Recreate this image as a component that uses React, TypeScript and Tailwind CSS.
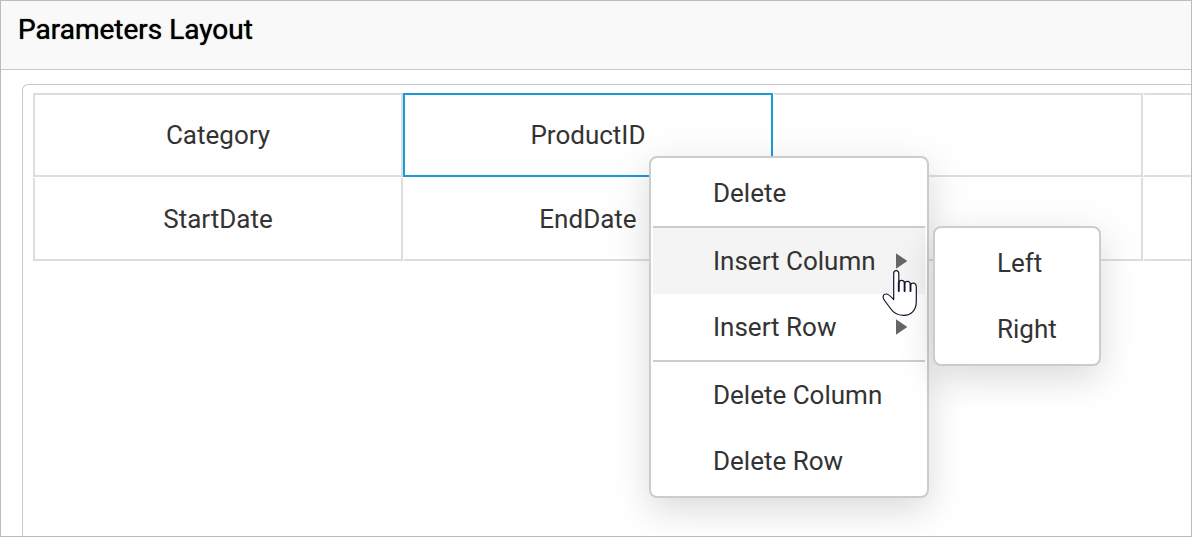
import { useState } from "react";
import type { ReactNode } from "react";

const columns = 4;
const parameters = ["Category", "ProductID", "", "", "StartDate", "EndDate", "", ""];

function Cell({
  label,
  index,
  selected,
  onSelect,
}: {
  label: string;
  index: number;
  selected: boolean;
  onSelect: () => void;
}) {
  const first = index % columns === 0;
  const top = index < columns;
  return (
    <button
      type="button"
      onClick={onSelect}
      aria-label={label || "Empty cell"}
      aria-pressed={selected}
      className={`flex h-[84px] items-center justify-center border-2 bg-[#fefefe] outline-none ${
        selected
          ? "border-[#1c9ad6]"
          : `border-r-[#dddddd] border-b-[#dddddd] ${first ? "border-l-[#dddddd]" : "border-l-[#fefefe]"} ${top ? "border-t-[#dddddd]" : "border-t-[#fefefe]"}`
      }`}
    >
      {label}
    </button>
  );
}

function MenuItem({
  children,
  active = false,
  submenu = false,
}: {
  children: ReactNode;
  active?: boolean;
  submenu?: boolean;
}) {
  return (
    <button
      type="button"
      role="menuitem"
      aria-haspopup={submenu ? "menu" : undefined}
      className={`flex h-[66px] w-full items-center justify-between pr-[18px] pl-[60px] text-left whitespace-nowrap hover:bg-[#f4f4f4] ${
        active ? "bg-[#f4f4f4]" : ""
      }`}
    >
      <span>{children}</span>
      {submenu && (
        <svg className="h-4 w-3" viewBox="0 0 12 16" fill="#666666" aria-hidden="true">
          <path d="M1 0.3 12.3 8 1 15.7Z" />
        </svg>
      )}
    </button>
  );
}

function HandCursor() {
  return (
    <svg
      className="pointer-events-none absolute top-[41px] left-[229px] z-20 h-[48px] w-[36px]"
      viewBox="0 0 36 48"
      fill="#ffffff"
      stroke="#14142b"
      strokeWidth="1.2"
      strokeLinejoin="round"
      strokeLinecap="round"
      aria-hidden="true"
    >
      <path d="M11.7 30.5V4.5C11.7 2.6 12.7 1.6 14.2 1.6S16.8 2.6 16.8 4.5V13.8C17.1 12.2 18.1 11.4 19.4 11.4C21.2 11.4 22.4 12.6 22.6 14.2C23.1 12.8 24.1 12.4 25.3 12.4C27.2 12.4 28.3 13.6 28.5 15.7C29 14.6 29.9 14.2 31 14.2C33.2 14.2 34.3 15.5 34.3 18.2V32.5C34.3 41 29.5 46.3 21.5 46.3C15.5 46.3 11.5 44 8.5 39.5L2.2 31C0.2 28.3 1 25.4 3.8 25C5.5 24.8 8 26.4 11.7 30.5Z" />
      <path d="M16.8 13.5V22M22.6 14V22M28.5 15.5V22" fill="none" strokeWidth="1.9" />
    </svg>
  );
}

const panel =
  "rounded-lg border-2 border-[#cccccc] bg-white p-0.5 shadow-[0_12px_36px_rgba(0,0,0,0.15)]";

export default function App() {
  const [selected, setSelected] = useState(1);

  return (
    <div className="relative flex min-h-screen flex-col overflow-hidden border border-[#bcbcbc] bg-white font-['Roboto',sans-serif] text-[26px] leading-8 text-[#333333]">
      <header className="border-b border-[#c8c8c8] bg-[#f9f9f9] px-[17px] pt-[13px] pb-[23px]">
        <h1 className="text-[28px] leading-8 font-normal text-black [text-shadow:0_0_1px_black]">
          Parameters Layout
        </h1>
      </header>

      <main className="flex grow flex-col pt-3.5 pl-[21px]">
        <div className="grow overflow-hidden rounded-tl-md border-t border-l border-[#c8c8c8] pt-2 pl-2.5">
          <div className="grid w-max grid-cols-[repeat(4,370px)]">
            {parameters.map((label, index) => (
              <Cell
                key={index}
                index={index}
                label={label}
                selected={index === selected}
                onSelect={() => setSelected(index)}
              />
            ))}
          </div>
        </div>
      </main>

      <div role="menu" className={`absolute top-[155px] left-[648px] w-[280px] ${panel}`}>
        <MenuItem>Delete</MenuItem>
        <div className="relative border-t-2 border-[#cccccc]">
          <MenuItem active submenu>
            Insert Column
          </MenuItem>
          <div role="menu" className={`absolute -top-0.5 left-[280px] w-[168px] ${panel}`}>
            <MenuItem>Left</MenuItem>
            <MenuItem>Right</MenuItem>
          </div>
          <HandCursor />
        </div>
        <MenuItem submenu>Insert Row</MenuItem>
        <div className="border-t-2 border-[#cccccc]">
          <MenuItem>Delete Column</MenuItem>
        </div>
        <MenuItem>Delete Row</MenuItem>
      </div>
    </div>
  );
}
